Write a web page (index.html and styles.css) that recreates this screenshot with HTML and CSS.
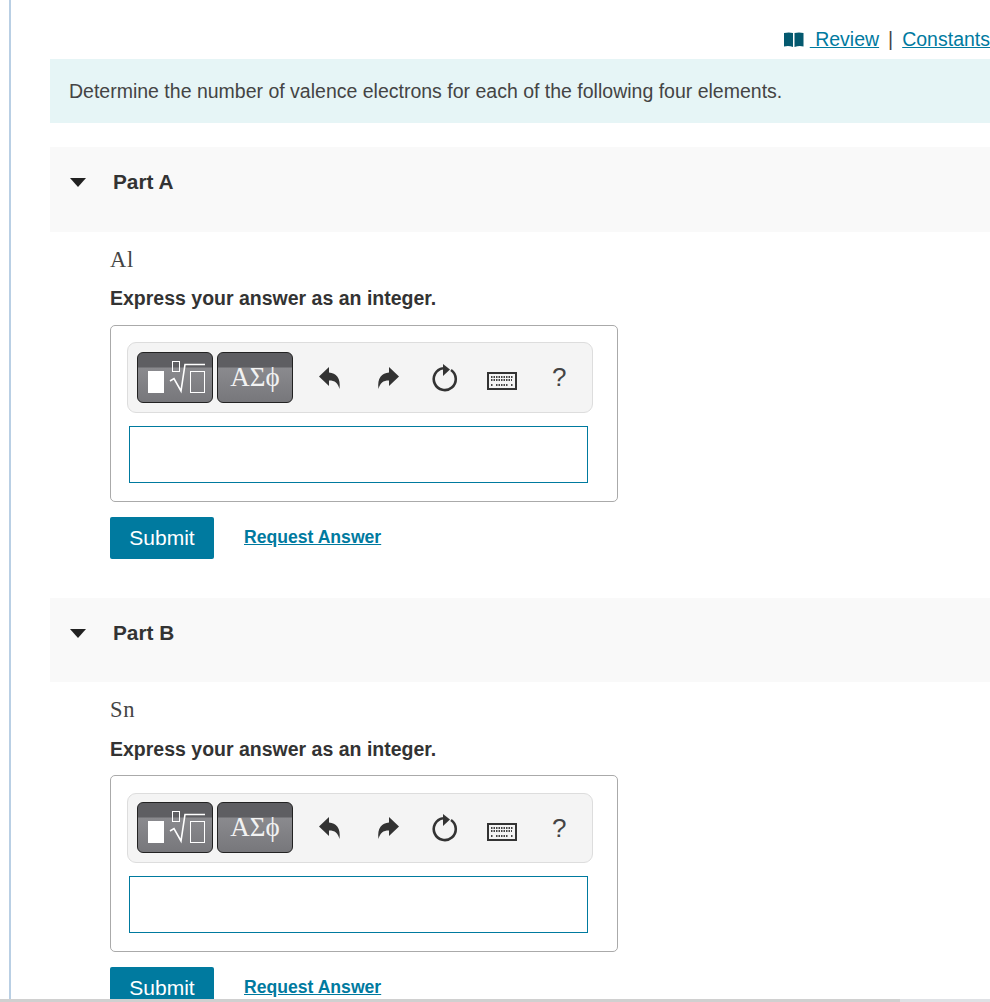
FILE: index.html
```html
<!DOCTYPE html>
<html lang="en">
<head>
    <meta charset="UTF-8">
    <title>Valence Electrons</title>
    <link rel="stylesheet" href="styles.css">
</head>
<body>
    <div class="page">
        <div class="top-links">
            <svg class="book-icon" width="20" height="15" viewBox="0 0 20 15">
                <path d="M0 1 Q5 0 9 1 V15 Q5 13.500 0 14.500 Z M10.500 1 Q15 0 19.500 1 V14.500 Q15 13.500 10.500 15 Z" fill="#04596f"/>
            </svg>
            <a href="#">&nbsp;Review</a>
            <span class="sep">|</span>
            <a href="#">Constants</a>
        </div>

        <div class="intro">Determine the number of valence electrons for each of the following four elements.</div>

        <section class="part">
            <div class="part-head"><span class="arrow"></span><span class="part-title">Part A</span></div>
            <div class="part-body">
                <p class="element">Al</p>
                <p class="prompt">Express your answer as an integer.</p>
                <div class="answer-box">
                    <div class="toolbar">
                        <div class="tpl-btn">
                            <svg width="74" height="49" viewBox="0 0 74 49" fill="none" stroke="#fff">
                                <rect x="10" y="18" width="16" height="22" fill="#fff" stroke="none"/>
                                <rect x="34.500" y="8.500" width="7" height="10"/>
                                <path d="M32 28 L36 25.500 L43 38 L47 11.500 H67" stroke-width="1.600"/>
                                <rect x="52.500" y="18.500" width="14" height="21"/>
                            </svg>
                        </div>
                        <div class="tpl-btn symbols">ΑΣϕ</div>
                        <svg class="tool undo" width="22" height="24" viewBox="0 0 22 24"><path d="M0 10.500 L10 1 V6.500 C17 7 22 12 20.500 23 C19 17 16 14.500 10 14.500 V20 Z" fill="#333"/></svg>
                        <svg class="tool redo" width="22" height="24" viewBox="0 0 22 24"><path d="M22 10.500 L12 1 V6.500 C5 7 0 12 1.500 23 C3 17 6 14.500 12 14.500 V20 Z" fill="#333"/></svg>
                        <svg class="tool reset" width="26" height="28" viewBox="0 0 26 28"><path d="M19 6 A11 11 0 1 1 11 4.200" fill="none" stroke="#333" stroke-width="2.600"/><path d="M11 0 L18 5.500 L11 12 Z" fill="#333"/></svg>
                        <svg class="tool keys" width="30" height="18" viewBox="0 0 30 18"><rect x="1" y="1" width="28" height="16" fill="#f4f4f4" stroke="#333" stroke-width="2"/><path d="M4 5 H26 M4 8 H25 M4 13 H6 M9 13 H21 M24 13 H26" stroke="#444" stroke-width="1.800" stroke-dasharray="1.500 1"/></svg>
                        <span class="help">?</span>
                    </div>
                    <div class="answer-input"></div>
                </div>
                <div class="actions">
                    <button class="submit">Submit</button>
                    <a class="request" href="#">Request Answer</a>
                </div>
            </div>
        </section>

        <section class="part">
            <div class="part-head"><span class="arrow"></span><span class="part-title">Part B</span></div>
            <div class="part-body">
                <p class="element">Sn</p>
                <p class="prompt">Express your answer as an integer.</p>
                <div class="answer-box">
                    <div class="toolbar">
                        <div class="tpl-btn">
                            <svg width="74" height="49" viewBox="0 0 74 49" fill="none" stroke="#fff">
                                <rect x="10" y="18" width="16" height="22" fill="#fff" stroke="none"/>
                                <rect x="34.500" y="8.500" width="7" height="10"/>
                                <path d="M32 28 L36 25.500 L43 38 L47 11.500 H67" stroke-width="1.600"/>
                                <rect x="52.500" y="18.500" width="14" height="21"/>
                            </svg>
                        </div>
                        <div class="tpl-btn symbols">ΑΣϕ</div>
                        <svg class="tool undo" width="22" height="24" viewBox="0 0 22 24"><path d="M0 10.500 L10 1 V6.500 C17 7 22 12 20.500 23 C19 17 16 14.500 10 14.500 V20 Z" fill="#333"/></svg>
                        <svg class="tool redo" width="22" height="24" viewBox="0 0 22 24"><path d="M22 10.500 L12 1 V6.500 C5 7 0 12 1.500 23 C3 17 6 14.500 12 14.500 V20 Z" fill="#333"/></svg>
                        <svg class="tool reset" width="26" height="28" viewBox="0 0 26 28"><path d="M19 6 A11 11 0 1 1 11 4.200" fill="none" stroke="#333" stroke-width="2.600"/><path d="M11 0 L18 5.500 L11 12 Z" fill="#333"/></svg>
                        <svg class="tool keys" width="30" height="18" viewBox="0 0 30 18"><rect x="1" y="1" width="28" height="16" fill="#f4f4f4" stroke="#333" stroke-width="2"/><path d="M4 5 H26 M4 8 H25 M4 13 H6 M9 13 H21 M24 13 H26" stroke="#444" stroke-width="1.800" stroke-dasharray="1.500 1"/></svg>
                        <span class="help">?</span>
                    </div>
                    <div class="answer-input"></div>
                </div>
                <div class="actions">
                    <button class="submit">Submit</button>
                    <a class="request" href="#">Request Answer</a>
                </div>
            </div>
        </section>

        <div class="bottom-bar"><div class="bottom-thumb"></div></div>
    </div>
</body>
</html>
```

FILE: styles.css
```css
* {
    margin: 0;
    padding: 0;
    box-sizing: border-box;
}

html, body {
    height: 100%;
    overflow: hidden;
}

body {
    font-family: "Liberation Sans", Arial, sans-serif;
    background-color: #ffffff;
    color: #333333;
}

.page {
    position: relative;
    height: 1002px;
    padding-left: 50px;
    overflow: hidden;
}

/* thin blue rule on the far left */
.page::before {
    content: "";
    position: absolute;
    left: 9px;
    top: 0;
    bottom: 0;
    width: 2px;
    background-color: #b9cfe4;
}

a {
    color: #007a9f;
    text-decoration: underline;
}

.top-links {
    display: flex;
    justify-content: flex-end;
    align-items: center;
    height: 59px;
    padding-top: 20px;
    font-size: 19.5px;
    white-space: pre;
}

.book-icon {
    margin-right: 6px;
}

.sep {
    margin: 0 9px;
    color: #444444;
}

.intro {
    display: flex;
    align-items: center;
    height: 64px;
    padding-left: 19px;
    font-size: 19.5px;
    color: #444444;
    background-color: #e6f5f6;
}

.part-head {
    display: flex;
    align-items: center;
    height: 85px;
    margin-top: 24px;
    padding: 0 0 15px 20px;
    background-color: #f9f9f9;
}

.part + .part .part-head {
    margin-top: 39px;
    height: 84px;
    padding-bottom: 14px;
}

.arrow {
    width: 0;
    height: 0;
    border-left: 8px solid transparent;
    border-right: 8px solid transparent;
    border-top: 9px solid #222222;
}

.part-title {
    margin-left: 27px;
    font-size: 20.8px;
    font-weight: bold;
}

.part-body {
    padding: 15px 0 0 60px;
}

.element {
    font-family: "Liberation Serif", "Times New Roman", serif;
    font-size: 22.5px;
    line-height: 26px;
    letter-spacing: 0.8px;
    color: #444444;
}

.prompt {
    margin-top: 14px;
    font-size: 19.5px;
    line-height: 24px;
    font-weight: bold;
}

.part:first-of-type .prompt {
    margin-top: 13px;
}

.answer-box {
    width: 508px;
    height: 177px;
    margin-top: 15px;
    padding: 16px;
    border: 1px solid #aaaaaa;
    border-radius: 5px;
}

.part + .part .answer-box {
    margin-top: 14px;
    padding-top: 17px;
}

.toolbar {
    display: flex;
    align-items: center;
    width: 466px;
    height: 71px;
    padding-left: 9px;
    background-color: #f4f4f4;
    border: 1px solid #dddddd;
    border-radius: 9px;
}

.part + .part .toolbar {
    height: 70px;
}

.part + .part .tpl-btn {
    margin-top: -1px;
}

.tpl-btn {
    display: flex;
    flex: none;
    align-items: center;
    justify-content: center;
    width: 76px;
    height: 51px;
    margin-right: 4px;
    background: linear-gradient(#5e5e62 0, #5e5e62 14px, #8a8a8e 15px, #77777b 100%);
    border: 1px solid #222222;
    border-radius: 6px;
    color: #ffffff;
}

.symbols {
    font-family: "Liberation Serif", "Times New Roman", serif;
    font-size: 27px;
    color: #f2f2f2;
}

.tool {
    flex: none;
}

.undo {
    margin-left: 22px;
}

.redo {
    margin-left: 36px;
}

.reset {
    margin-left: 33px;
}

.keys {
    margin-left: 29px;
    margin-top: 7px;
}

.help {
    margin-left: 35px;
    font-size: 26px;
    color: #444444;
}

.answer-input {
    width: 459px;
    height: 57px;
    margin: 13px 0 0 2px;
    background-color: #ffffff;
    border: 1px solid #007a9f;
}

.actions {
    display: flex;
    align-items: center;
    gap: 30px;
    margin-top: 15px;
}

.submit {
    width: 104px;
    height: 42px;
    font-family: inherit;
    font-size: 21px;
    color: #ffffff;
    background-color: #007a9f;
    border: none;
    border-radius: 2px;
}

.request {
    margin-bottom: 1px;
    font-size: 17.6px;
    font-weight: bold;
}

.bottom-bar {
    position: absolute;
    left: 0;
    right: 0;
    bottom: 0;
    height: 3px;
    background-color: #dfe1e5;
}

.bottom-thumb {
    width: 900px;
    height: 100%;
    background-color: #d0d0d0;
}
```
